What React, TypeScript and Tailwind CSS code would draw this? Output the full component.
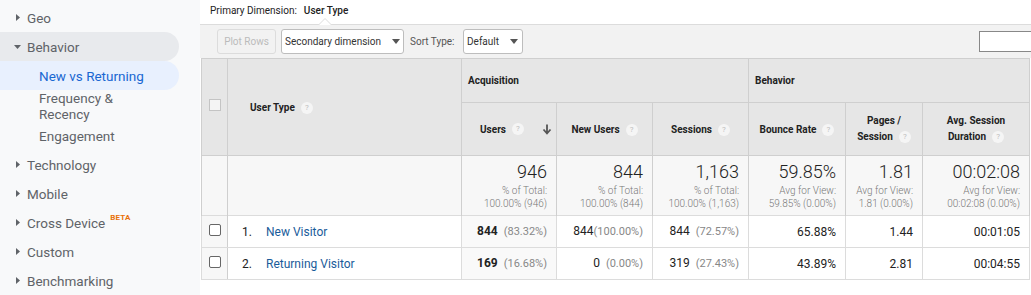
import React from "react";

const Help = () => (
  <span className="ml-[6px] inline-flex h-[12px] w-[12px] items-center justify-center rounded-full bg-[#f5f5f5] align-middle text-[8px] font-normal leading-none text-[#bdbdbd]">
    ?
  </span>
);

const Tri = ({ down }: { down?: boolean }) =>
  down ? (
    <svg width="9" height="9" viewBox="0 0 9 9" className="shrink-0">
      <path d="M1 3 L8 3 L4.5 7 Z" fill="#5f6368" />
    </svg>
  ) : (
    <svg width="9" height="9" viewBox="0 0 9 9" className="shrink-0">
      <path d="M3 1 L7 4.5 L3 8 Z" fill="#5f6368" />
    </svg>
  );

const SideItem = ({ label, beta }: { label: string; beta?: boolean }) => (
  <div className="flex h-[29px] items-center pl-[13px] text-[#5f6368]">
    <Tri />
    <span className="ml-[5px]">{label}</span>
    {beta && <span className="ml-[5px] -mt-[10px] text-[8px] font-bold tracking-wide text-[#e8710a]">BETA</span>}
  </div>
);

const Sidebar = () => (
  <div className="w-[200px] shrink-0 bg-[#f8f9fa] pt-[3px] text-[13.5px] leading-[16px]" style={{ fontFamily: "Roboto, 'Open Sans', sans-serif" }}>
    <SideItem label="Geo" />
    <div className="flex h-[29px] w-[179px] items-center rounded-r-full bg-[#e8eaed] pl-[13px] text-[#5f6368]">
      <Tri down />
      <span className="ml-[5px]">Behavior</span>
    </div>
    <div className="flex h-[29px] w-[179px] items-center rounded-r-full bg-[#e8f0fe] pl-[39px] text-[#1967d2]">New vs Returning</div>
    <div className="flex h-[31px] flex-col justify-center pl-[39px] text-[#5f6368]">
      <span>Frequency &amp;</span>
      <span>Recency</span>
    </div>
    <div className="flex h-[29px] items-center pl-[39px] text-[#5f6368]">Engagement</div>
    <SideItem label="Technology" />
    <SideItem label="Mobile" />
    <SideItem label="Cross Device" beta />
    <SideItem label="Custom" />
    <SideItem label="Benchmarking" />
  </div>
);

const Caret = () => (
  <svg width="8" height="5" viewBox="0 0 8 5" className="ml-[11px] shrink-0">
    <path d="M0 0 L8 0 L4 5 Z" fill="#555" />
  </svg>
);

const Total = ({ big, l1, l2 }: { big: string; l1: string; l2: string }) => (
  <td className="border-x border-[#cfcfcf] bg-[#f7f7f7] pr-[9px] text-right align-middle">
    <div className="text-[18px] font-light leading-[20px] text-[#222]">{big}</div>
    <div className="mt-[2px] text-[10px] font-light leading-[13px] text-[#777]">{l1}</div>
    <div className="text-[10px] font-light leading-[13px] text-[#777]">{l2}</div>
  </td>
);

const Cell = ({ v, p, bold, bg, gap }: { v: string; p?: string; bold?: boolean; bg?: boolean; gap?: boolean }) => (
  <td className={`border border-[#dcdcdc] pr-[9px] text-right align-middle text-[12px] text-[#222] ${bg ? "bg-[#f9f9f9]" : "bg-white"}`}>
    <span className={bold ? "font-bold" : ""}>{v}</span>
    {p && <span className={`${gap ? "" : "ml-[6px]"} text-[11px] text-[#888]`}>{p}</span>}
  </td>
);

const Check = () => (
  <span className="inline-block h-[12px] w-[12px] rounded-[2px] border border-[#666] bg-white" />
);

const rows = [
  { n: "1.", name: "New Visitor", u: "844", up: "(83.32%)", nu: "844", nup: "(100.00%)", nugap: true, s: "844", sp: "(72.57%)", b: "65.88%", pg: "1.44", d: "00:01:05" },
  { n: "2.", name: "Returning Visitor", u: "169", up: "(16.68%)", nu: "0", nup: "(0.00%)", nugap: false, s: "319", sp: "(27.43%)", b: "43.89%", pg: "2.81", d: "00:04:55" },
];

export default function App() {
  return (
    <div className="flex h-[295px] w-[1031px] overflow-hidden bg-white">
      <Sidebar />
      <div className="min-w-0 flex-1" style={{ fontFamily: "Roboto, 'Liberation Sans', sans-serif" }}>
        <div className="flex h-[24px] items-center pb-[4px] pl-[10px] text-[10px] text-[#222]">
          <span>Primary Dimension:</span>
          <span className="ml-[7px] font-medium">User Type</span>
        </div>
        <div className="relative flex h-[34px] items-center whitespace-nowrap border-t border-[#dcdcdc] bg-[#f2f2f2] pl-[17px] pr-0 text-[10px]">
          <svg width="14" height="8" viewBox="0 0 14 8" className="absolute -top-[7px] left-[118px]">
            <path d="M0 7.5 L7 0.5 L14 7.5" fill="#fff" stroke="#dcdcdc" strokeWidth="1" />
            <rect x="0" y="7" width="14" height="1" fill="#f2f2f2" />
          </svg>
          <div className="flex h-[25px] w-[59px] shrink-0 items-center justify-center rounded-[3px] border border-[#dcdcdc] text-[#bbb]">Plot Rows</div>
          <div className="ml-[5px] flex h-[25px] w-[123px] shrink-0 items-center justify-center rounded-[3px] border border-[#bdbdbd] bg-white text-[#333]">
            <span>Secondary dimension</span>
            <Caret />
          </div>
          <span className="ml-[6px] text-[#555]">Sort Type:</span>
          <div className="ml-[8px] flex h-[25px] w-[60px] shrink-0 items-center justify-center rounded-[3px] border border-[#bdbdbd] bg-white text-[#333]">
            <span>Default</span>
            <Caret />
          </div>
          <div className="ml-auto h-[21px] w-[52px] shrink-0 border border-r-0 border-[#888] bg-white" />
        </div>
        <table className="ml-[1px] w-[828px] table-fixed border-collapse text-[10px]">
          <colgroup>
            <col className="w-[26px]" />
            <col className="w-[234px]" />
            <col className="w-[95px]" />
            <col className="w-[96px]" />
            <col className="w-[96px]" />
            <col className="w-[97px]" />
            <col className="w-[77px]" />
            <col className="w-[107px]" />
          </colgroup>
          <thead>
            <tr className="h-[44px] bg-[#e6e6e6]">
              <td rowSpan={2} className="border border-[#cfcfcf] text-center align-middle">
                <span className="inline-block h-[12px] w-[12px] border border-[#c4c4c4] bg-[#f4f4f4]" />
              </td>
              <td rowSpan={2} className="border border-[#cfcfcf] pl-[22px] align-middle font-bold text-[#222]">
                User Type
                <Help />
              </td>
              <td colSpan={3} className="border border-[#cfcfcf] pl-[6px] font-bold text-[#222]">Acquisition</td>
              <td colSpan={3} className="border border-[#cfcfcf] pl-[6px] font-bold text-[#222]">Behavior</td>
            </tr>
            <tr className="h-[53px] bg-[#e6e6e6] font-bold text-[#222]">
              <td className="border border-[#cfcfcf]">
                <div className="flex items-center pl-[18px] pr-[4px]">
                  <span>Users</span>
                  <Help />
                  <svg width="10" height="11" viewBox="0 0 10 11" className="ml-auto">
                    <path d="M5 0.5 V9 M1.5 5.5 L5 9.5 L8.5 5.5" stroke="#555" strokeWidth="1.8" fill="none" />
                  </svg>
                </div>
              </td>
              <td className="border border-[#cfcfcf] text-center">New Users<Help /></td>
              <td className="border border-[#cfcfcf] text-center">Sessions<Help /></td>
              <td className="border border-[#cfcfcf] text-center">Bounce Rate<Help /></td>
              <td className="border border-[#cfcfcf] text-center leading-[16px]">Pages /<br />Session<Help /></td>
              <td className="border border-[#cfcfcf] text-center leading-[16px]">Avg. Session<br />Duration<Help /></td>
            </tr>
          </thead>
          <tbody>
            <tr className="h-[60px]">
              <td className="border-x border-[#cfcfcf] bg-[#f7f7f7]" />
              <td className="border-x border-[#cfcfcf] bg-[#f7f7f7]" />
              <Total big="946" l1="% of Total:" l2="100.00% (946)" />
              <Total big="844" l1="% of Total:" l2="100.00% (844)" />
              <Total big="1,163" l1="% of Total:" l2="100.00% (1,163)" />
              <Total big="59.85%" l1="Avg for View:" l2="59.85% (0.00%)" />
              <Total big="1.81" l1="Avg for View:" l2="1.81 (0.00%)" />
              <Total big="00:02:08" l1="Avg for View:" l2="00:02:08 (0.00%)" />
            </tr>
            {rows.map((r) => (
              <tr key={r.n} className="h-[32px]">
                <td className="border border-[#dcdcdc] border-r-[#cfcfcf] bg-[#f7f7f7] pl-[7px] align-middle">
                  <Check />
                </td>
                <td className="border border-[#dcdcdc] bg-white align-middle text-[12px]">
                  <span className="inline-block w-[38px] pl-[14px] text-[#222]">{r.n}</span>
                  <span className="text-[#1a5c9a]">{r.name}</span>
                </td>
                <Cell v={r.u} p={r.up} bold bg />
                <Cell v={r.nu} p={r.nup} gap={r.nugap} />
                <Cell v={r.s} p={r.sp} />
                <Cell v={r.b} />
                <Cell v={r.pg} />
                <Cell v={r.d} />
              </tr>
            ))}
          </tbody>
        </table>
      </div>
    </div>
  );
}
